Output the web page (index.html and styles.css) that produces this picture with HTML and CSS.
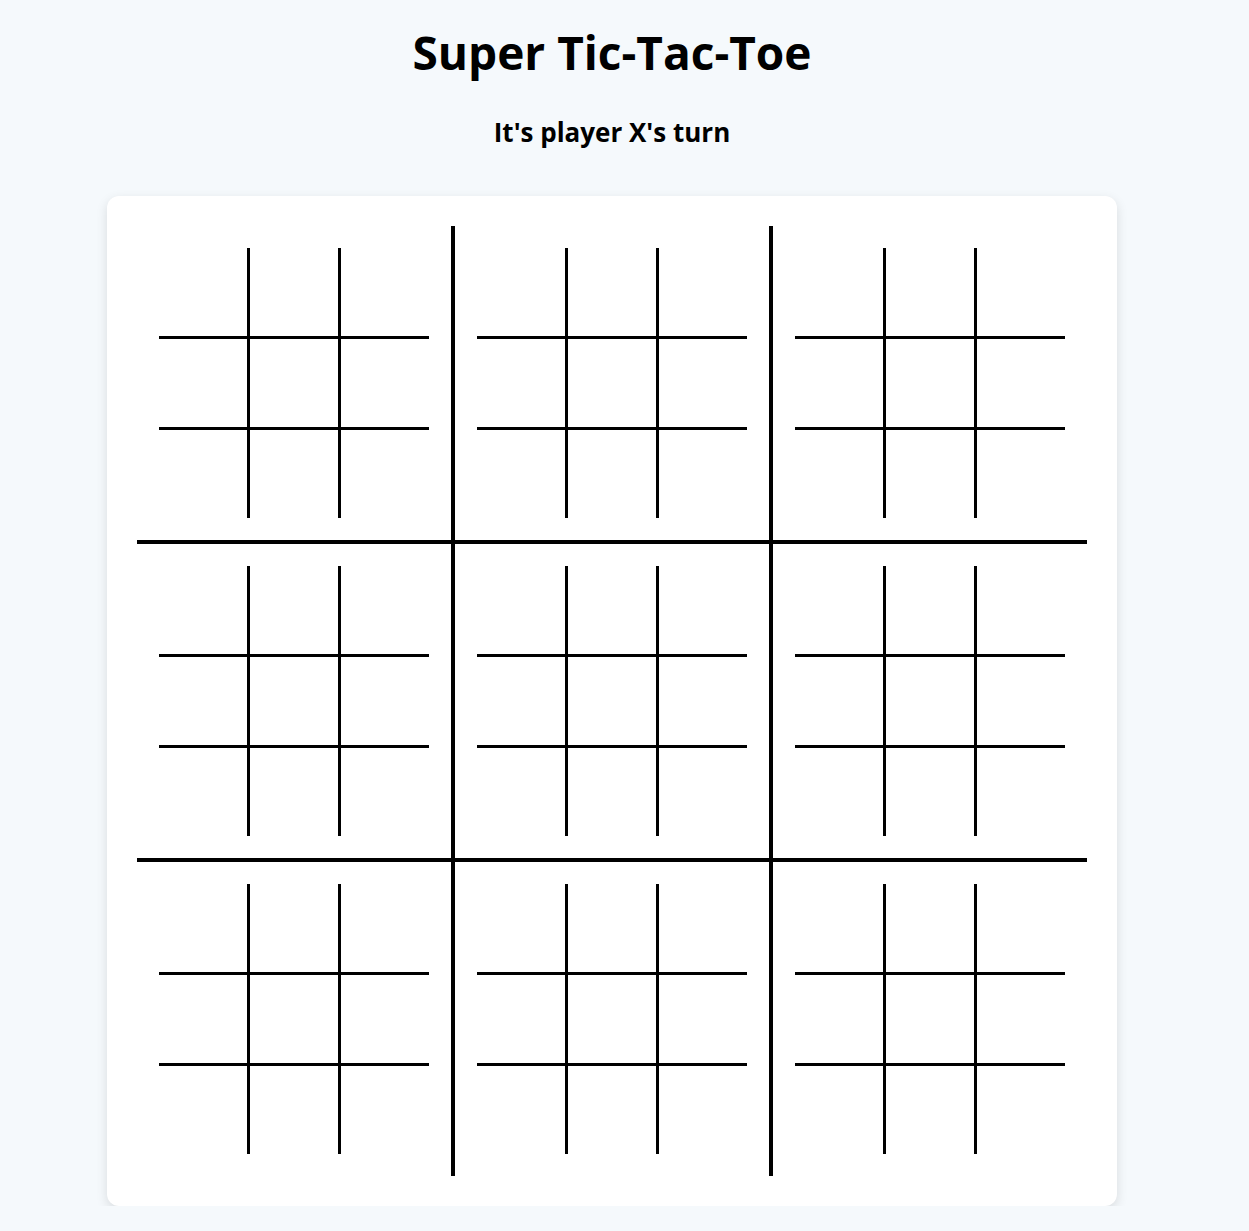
FILE: index.html
```html
<!DOCTYPE html>
<html lang="en">
  <head>
    <meta charset="UTF-8" />
    <meta name="viewport" content="width=device-width, initial-scale=1.0" />
    <title>Super Tic-Tac-Toe</title>
    <link rel="stylesheet" href="styles.css">
  </head>

  <body>
    <div class="game">
      <h1 class="title">Super Tic-Tac-Toe</h1>
      <h2 class="status">It's player X's turn</h2>

      <!-- big board: 9 small boards -->
      <div class="card">
        <div class="board">
          <div class="sub"><div class="cells"><i></i><i></i><i></i><i></i><i></i><i></i><i></i><i></i><i></i></div></div>
          <div class="sub"><div class="cells"><i></i><i></i><i></i><i></i><i></i><i></i><i></i><i></i><i></i></div></div>
          <div class="sub"><div class="cells"><i></i><i></i><i></i><i></i><i></i><i></i><i></i><i></i><i></i></div></div>
          <div class="sub"><div class="cells"><i></i><i></i><i></i><i></i><i></i><i></i><i></i><i></i><i></i></div></div>
          <div class="sub"><div class="cells"><i></i><i></i><i></i><i></i><i></i><i></i><i></i><i></i><i></i></div></div>
          <div class="sub"><div class="cells"><i></i><i></i><i></i><i></i><i></i><i></i><i></i><i></i><i></i></div></div>
          <div class="sub"><div class="cells"><i></i><i></i><i></i><i></i><i></i><i></i><i></i><i></i><i></i></div></div>
          <div class="sub"><div class="cells"><i></i><i></i><i></i><i></i><i></i><i></i><i></i><i></i><i></i></div></div>
          <div class="sub"><div class="cells"><i></i><i></i><i></i><i></i><i></i><i></i><i></i><i></i><i></i></div></div>
        </div>
      </div>
    </div>
  </body>
</html>
```

FILE: styles.css
```css
* {
  margin: 0;
  padding: 0;
  box-sizing: border-box;
}

body {
  background-color: #f5f9fc;
  font-family: "Open Sans", "Noto Sans", sans-serif;
  color: #000;
  padding-right: 25px;
}

.game {
  display: flex;
  flex-direction: column;
  align-items: center;
}

.title {
  font-size: 46px;
  font-weight: 700;
  line-height: 1;
  margin-top: 29px;
}

.status {
  font-size: 26px;
  font-weight: 700;
  line-height: 1;
  margin-top: 44px;
}

.card {
  margin-top: 51px;
  background-color: #fff;
  border-radius: 12px;
  padding: 30px;
  box-shadow: 0 4px 12px rgba(0, 0, 0, 0.12);
}

/* big grid */
.board {
  display: grid;
  grid-template-columns: 318px 318px 314px;
  grid-template-rows: 318px 318px 314px;
}

.sub {
  display: flex;
  align-items: center;
  justify-content: center;
}

/* thick lines between the small boards */
.sub:nth-child(3n+1),
.sub:nth-child(3n+2) {
  border-right: 4px solid #000;
}

.sub:nth-child(-n+6) {
  border-bottom: 4px solid #000;
}

/* small grid */
.cells {
  display: grid;
  grid-template-columns: repeat(3, auto);
}

.cells i {
  display: block;
  width: 88px;
  height: 88px;
}

.cells i:nth-child(3n+1),
.cells i:nth-child(3n+2) {
  border-right: 3px solid #000;
  width: 91px;
}

.cells i:nth-child(-n+6) {
  border-bottom: 3px solid #000;
  height: 91px;
}
```
